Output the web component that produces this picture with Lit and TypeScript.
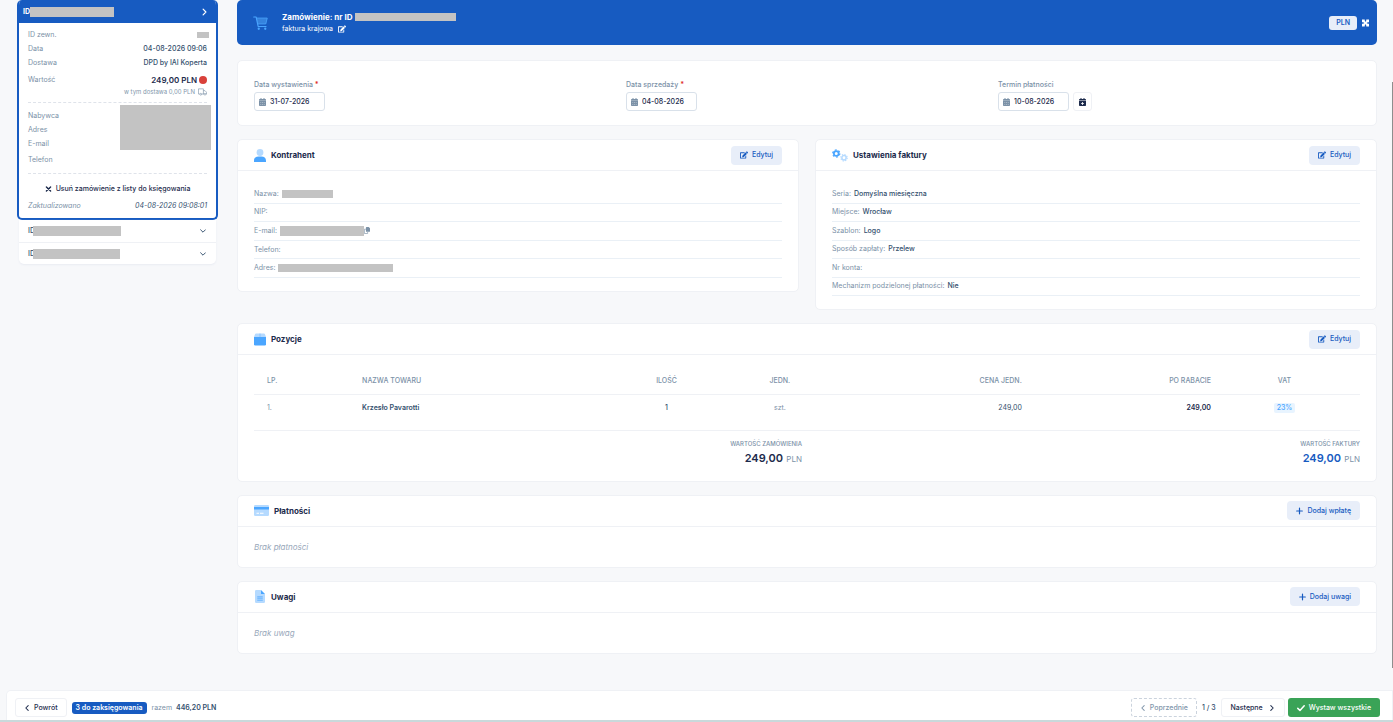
import { LitElement, html, css, svg, nothing, type TemplateResult } from "lit";
import { customElement, property } from "lit/decorators.js";
import { classMap } from "lit/directives/class-map.js";

type Icon = { box: string; body: TemplateResult };

const icons: Record<string, Icon> = {
  edit: {
    box: "0 0 576 512",
    body: svg`<path fill="currentColor" d="M402.6 83.2l90.2 90.2c3.8 3.8 3.8 10 0 13.8L274.4 405.6l-92.8 10.3c-12.4 1.4-22.9-9.1-21.5-21.5l10.3-92.8L388.8 83.2c3.8-3.8 10-3.8 13.8 0zm162-22.9l-48.8-48.8c-15.2-15.2-39.9-15.2-55.2 0l-35.4 35.4c-3.8 3.8-3.8 10 0 13.8l90.2 90.2c3.8 3.8 10 3.8 13.8 0l35.4-35.4c15.2-15.3 15.2-40 0-55.2zM384 346.2V448H64V128h229.8c3.2 0 6.2-1.3 8.5-3.5l40-40c7.6-7.6 2.2-20.5-8.5-20.5H48C21.5 64 0 85.5 0 112v352c0 26.5 21.5 48 48 48h352c26.5 0 48-21.5 48-48V306.2c0-10.7-12.9-16-20.5-8.5l-40 40c-2.2 2.3-3.5 5.3-3.5 8.5z"/>`,
  },
  cart: {
    box: "0 0 30 28",
    body: svg`<path fill="#3583de" d="M7 4h22l-3 12H9z"/><path fill="none" stroke="#4ba6ff" stroke-width="2.4" stroke-linecap="round" stroke-linejoin="round" d="M1.5 2h4.8l4 19H26"/><path fill="none" stroke="#4ba6ff" stroke-width="1.4" d="M7 4h21.500l-3 12H9.500"/><circle cx="11.500" cy="25.500" r="2.300" fill="#4ba6ff"/><circle cx="24.500" cy="25.500" r="2.300" fill="#4ba6ff"/>`,
  },
  user: {
    box: "0 0 24 26",
    body: svg`<circle cx="12" cy="7" r="6.800" fill="#b5daff"/><path fill="#4ba6ff" d="M0 26v-3c0-5 4-8 9-8h6c5 0 9 3 9 8v3z"/>`,
  },
  gears: {
    box: "0 0 32 26",
    body: svg`<circle cx="8.500" cy="9" r="4.800" fill="none" stroke="#4ba6ff" stroke-width="3.600"/><circle cx="8.500" cy="9" r="7.200" fill="none" stroke="#4ba6ff" stroke-width="2.400" stroke-dasharray="3.700 3.840"/><circle cx="24" cy="17.500" r="4.300" fill="none" stroke="#b5daff" stroke-width="3"/><circle cx="24" cy="17.500" r="6.500" fill="none" stroke="#b5daff" stroke-width="2.200" stroke-dasharray="2.600 2.505"/>`,
  },
  box: {
    box: "0 0 24 24",
    body: svg`<path fill="#b5daff" d="M4 0h7v7H0l2-5.500C2.400.500 3 0 4 0zm9 0h7c1 0 1.600.500 2 1.500L24 7H13z"/><path fill="#8cc6ff" d="M10.500 0h3v7h-3z"/><path fill="#4ba6ff" d="M0 7h24v14.500a2.500 2.500 0 0 1-2.500 2.500h-19A2.500 2.500 0 0 1 0 21.500z"/>`,
  },
  card: {
    box: "0 0 30 24",
    body: svg`<rect y="1" width="30" height="22" rx="2.500" fill="#b5daff"/><path fill="#4ba6ff" d="M0 5h30v5H0z"/><path fill="#fff" d="M5 16.500h5v1.800H5zm7 0h7v1.800h-7z"/>`,
  },
  note: {
    box: "0 0 24 26",
    body: svg`<path fill="#b5daff" d="M4.500 0H14v8h8v15.500a2.500 2.500 0 0 1-2.500 2.500h-15A2.500 2.500 0 0 1 2 23.500v-21A2.500 2.500 0 0 1 4.500 0z"/><path fill="#4ba6ff" d="M14 0l8 8h-8z"/><path fill="#7dbeff" d="M6.500 12h11v2.600h-11zm0 3.200h11v3h-11zm0 3.600h11v3.200h-11z"/>`,
  },
  calendar: {
    box: "0 0 14 16",
    body: svg`<path fill="currentColor" d="M3 0h2v2h4V0h2v2h1.500A1.500 1.500 0 0 1 14 3.500V5H0V3.500A1.500 1.500 0 0 1 1.500 2H3zM0 5.500h14v9a1.500 1.500 0 0 1-1.500 1.500h-11A1.500 1.500 0 0 1 0 14.500z"/><path fill="#fff" opacity=".35" d="M2.500 8h2v2h-2zm3.500 0h2v2H6zm3.500 0h2v2h-2zm-7 4h2v2h-2zM6 12h2v2H6zm3.500 0h2v2h-2z"/>`,
  },
  calendarPlus: {
    box: "0 0 14 16",
    body: svg`<path fill="currentColor" d="M3 0h2v2h4V0h2v2h1.500A1.500 1.500 0 0 1 14 3.500V5H0V3.500A1.500 1.500 0 0 1 1.500 2H3zM0 6h14v8.500a1.500 1.500 0 0 1-1.500 1.500h-11A1.500 1.500 0 0 1 0 14.500z"/><path fill="#fff" d="M6.200 7.800h1.600V10H10v1.600H7.800v2.200H6.200v-2.200H4V10h2.200z"/>`,
  },
  right: { box: "0 0 10 10", body: svg`<path fill="none" stroke="currentColor" stroke-width="1.700" stroke-linecap="round" stroke-linejoin="round" d="M3 1l4 4-4 4"/>` },
  left: { box: "0 0 10 10", body: svg`<path fill="none" stroke="currentColor" stroke-width="1.700" stroke-linecap="round" stroke-linejoin="round" d="M7 1L3 5l4 4"/>` },
  down: { box: "0 0 10 10", body: svg`<path fill="none" stroke="currentColor" stroke-width="1.600" stroke-linecap="round" stroke-linejoin="round" d="M1 3l4 4 4-4"/>` },
  times: { box: "0 0 10 10", body: svg`<path fill="none" stroke="currentColor" stroke-width="2" stroke-linecap="round" d="M2 2l6 6M8 2l-6 6"/>` },
  plus: { box: "0 0 10 10", body: svg`<path fill="none" stroke="currentColor" stroke-width="1.700" stroke-linecap="round" d="M5 1v8M1 5h8"/>` },
  check: { box: "0 0 10 10", body: svg`<path fill="none" stroke="currentColor" stroke-width="1.900" stroke-linecap="round" stroke-linejoin="round" d="M1 5.500l2.700 2.700L9 2.200"/>` },
  expand: {
    box: "0 0 14 14",
    body: svg`<path fill="currentColor" d="M0 0h5.500v2L7 5.200 8.500 2V0H14v5.500h-2L8.800 7l3.200 1.500h2V14H8.500v-2L7 8.800 5.500 12v2H0V8.500h2L5.200 7 2 5.500H0z"/><path fill="currentColor" d="M5 5h4v4H5z"/>`,
  },
  truck: {
    box: "0 0 20 16",
    body: svg`<path fill="none" stroke="currentColor" stroke-width="1.500" stroke-linejoin="round" d="M4 12.500H1V1h11v11.500H8M12 5h3.500L19 8.500v4h-1.500M12 12.500h1.500"/><circle cx="6" cy="13" r="2" fill="none" stroke="currentColor" stroke-width="1.400"/><circle cx="15.500" cy="13" r="2" fill="none" stroke="currentColor" stroke-width="1.400"/>`,
  },
  copy: {
    box: "0 0 14 16",
    body: svg`<path fill="currentColor" d="M6 0h5l3 3v6.500A1.500 1.500 0 0 1 12.500 11H6a1.500 1.500 0 0 1-1.500-1.500v-8A1.500 1.500 0 0 1 6 0z"/><path fill="none" stroke="currentColor" stroke-width="1.500" d="M4.500 5H1v10h7.500v-3.500"/>`,
  },
};

@customElement("ui-icon")
export class UiIcon extends LitElement {
  @property() name = "";
  @property({ type: Number }) width = 8;
  @property({ type: Number }) height = 8;

  static styles = css`
    :host { display: inline-flex; flex: none; }
    svg { display: block; }
  `;

  render() {
    const icon = icons[this.name];
    return icon
      ? html`<svg width=${this.width} height=${this.height} viewBox=${icon.box} aria-hidden="true">${icon.body}</svg>`
      : nothing;
  }
}

@customElement("panel-card")
export class PanelCard extends LitElement {
  @property() heading = "";
  @property() icon = "";
  @property({ type: Number }) iconWidth = 12;
  @property() action = "";
  @property() actionIcon = "edit";

  static styles = css`
    :host {
      display: block;
      box-sizing: border-box;
      background: #fff;
      border: 1px solid #eff1f5;
      border-radius: 5px;
    }
    .head {
      display: flex;
      align-items: center;
      gap: 5px;
      box-sizing: border-box;
      height: 31px;
      padding: 0 16px;
      border-bottom: 1px solid #eff1f5;
    }
    h2 {
      flex: 1;
      margin: 0;
      font-size: 8px;
      line-height: 12px;
      font-weight: 700;
      color: #1d2b4c;
    }
    button {
      display: flex;
      align-items: center;
      gap: 4px;
      height: 19px;
      padding: 0 9px;
      border: 0;
      border-radius: 4px;
      background: #e8eef9;
      color: #175bc1;
      font: 500 7px/10px Inter, sans-serif;
    }
    .body { padding: 14px 16px 13px; }
  `;

  render() {
    const actionWidth = this.actionIcon === "edit" ? 8 : 7;
    return html`
      <div class="head">
        <ui-icon name=${this.icon} .width=${this.iconWidth} .height=${13}></ui-icon>
        <h2>${this.heading}</h2>
        <button type="button">
          <ui-icon name=${this.actionIcon} .width=${actionWidth}></ui-icon>${this.action}
        </button>
      </div>
      <div class="body"><slot></slot></div>
    `;
  }
}

type Detail = { label: string; value?: string; hidden?: number; tall?: boolean; copy?: boolean };

const contractor: Detail[] = [
  { label: "Nazwa:", hidden: 51 },
  { label: "NIP:" },
  { label: "E-mail:", hidden: 84, tall: true, copy: true },
  { label: "Telefon:" },
  { label: "Adres:", hidden: 115 },
];

const invoice: Detail[] = [
  { label: "Seria:", value: "Domyślna miesięczna" },
  { label: "Miejsce:", value: "Wrocław" },
  { label: "Szablon:", value: "Logo" },
  { label: "Sposób zapłaty:", value: "Przelew" },
  { label: "Nr konta:" },
  { label: "Mechanizm podzielonej płatności:", value: "Nie" },
];

const dates = [
  { id: "issued", label: "Data wystawienia", value: "31-07-2026", required: true },
  { id: "sold", label: "Data sprzedaży", value: "04-08-2026", required: true },
  { id: "due", label: "Termin płatności", value: "10-08-2026", required: false },
];

@customElement("app-root")
export class AppRoot extends LitElement {
  static styles = css`
    :host {
      display: flex;
      flex-direction: column;
      position: relative;
      box-sizing: border-box;
      min-height: 100vh;
      background: #f7f8fa;
      color: #34506e;
      font: 400 7px/10px Inter, sans-serif;
      border-bottom: 2px solid #c9d9db;
    }
    * { box-sizing: border-box; }
    button, input { font: inherit; color: inherit; }
    .layout {
      flex: 1;
      display: flex;
      align-items: flex-start;
      gap: 19px;
      padding: 0 16px 36px 17px;
    }
    .redacted { flex: none; height: 8px; background: #c3c3c3; }
    .redacted.tall { height: 10px; }

    aside { flex: none; width: 201px; }
    .order {
      border: 2px solid #175bc1;
      border-top: 0;
      border-radius: 5px;
      background: #fff;
      overflow: hidden;
    }
    .order-head {
      display: flex;
      align-items: center;
      width: 100%;
      height: 23px;
      padding: 0 8px 0 4px;
      border: 0;
      background: #175bc1;
      color: #fff;
      font-weight: 700;
    }
    .order-head ui-icon, .other ui-icon { margin-left: auto; }
    .order-body { padding: 5px 9px 3px; }
    .row {
      display: flex;
      justify-content: space-between;
      align-items: center;
      height: 14px;
    }
    .row.high { height: 18px; }
    .row.value { height: 18px; align-items: flex-end; padding-bottom: 3px; }
    .external { height: 6px; margin-right: -2px; }
    .label { color: #7b91a7; }
    .strong { font-weight: 500; }
    .sum {
      display: flex;
      align-items: center;
      gap: 2px;
      font-size: 8px;
      font-weight: 600;
      color: #1d2b4c;
    }
    .dot { width: 8px; height: 8px; border-radius: 50%; background: #d9413a; }
    .delivery {
      display: flex;
      justify-content: flex-end;
      align-items: center;
      gap: 3px;
      font-size: 6px;
      line-height: 8px;
      color: #8196ab;
    }
    .dash { height: 7px; border-bottom: 1px dashed #dfe3ea; }
    .dash.small { height: 5px; }
    .buyer { display: flex; justify-content: space-between; padding-top: 2px; }
    .buyer .redacted { height: 45px; width: 91px; margin-right: -4px; }
    .buyer-labels { padding-top: 4px; }
    .remove {
      display: flex;
      align-items: center;
      justify-content: center;
      gap: 4px;
      width: 100%;
      height: 16px;
      margin-top: 7px;
      padding: 0;
      border: 0;
      background: none;
      font-weight: 500;
      color: #1d2b4c;
    }
    .updated { font-style: italic; }
    .others {
      margin: 0 2px;
      background: #fff;
      border-radius: 0 0 5px 5px;
      box-shadow: 0 1px 2px #e9ecf2;
    }
    .other {
      display: flex;
      align-items: center;
      width: 100%;
      height: 22px;
      padding: 0 10px 0 9px;
      border: 0;
      background: none;
      font-weight: 500;
      text-align: left;
    }
    .other + .other { border-top: 1px solid #eff1f5; }
    .other .redacted { margin-left: -2px; }

    main { flex: 1; min-width: 0; display: flex; flex-direction: column; gap: 13px; }
    .hero {
      display: flex;
      align-items: center;
      height: 45px;
      margin-bottom: 2px;
      padding: 0 8px 0 16px;
      border-radius: 5px;
      background: #175bc1;
      color: #fff;
    }
    .hero-text { flex: 1; padding-left: 14px; }
    h1 {
      display: flex;
      align-items: center;
      gap: 3px;
      margin: 0;
      font-size: 8px;
      line-height: 12px;
      font-weight: 700;
    }
    .kind { display: flex; align-items: center; gap: 5px; height: 12px; }
    .icon-button { display: flex; padding: 0; border: 0; background: none; }
    .currency {
      height: 14px;
      margin-right: 5px;
      padding: 0 7px;
      border: 0;
      border-radius: 3px;
      background: #e8eef9;
      color: #175bc1;
      font-weight: 600;
    }
    .dates {
      display: grid;
      grid-template-columns: repeat(3, 1fr);
      gap: 10px;
      padding: 19px 16px 14px;
      background: #fff;
      border: 1px solid #eff1f5;
      border-radius: 5px;
    }
    .dates label { display: block; margin-bottom: 2px; font-weight: 500; color: #7b91a7; }
    .required { color: #e0322d; font-weight: 700; }
    .date-line { display: flex; gap: 4px; }
    .date-box {
      display: flex;
      align-items: center;
      gap: 4px;
      width: 71px;
      height: 19px;
      padding: 0 4px;
      border: 1px solid #d9e1ea;
      border-radius: 3px;
      color: #7b91a7;
    }
    .date-box input {
      min-width: 0;
      width: 100%;
      padding: 0;
      border: 0;
      outline: 0;
      background: none;
      font-weight: 500;
      color: #1d2b4c;
    }
    .quick {
      display: flex;
      align-items: center;
      justify-content: center;
      width: 19px;
      height: 19px;
      padding: 0;
      border: 1px solid #eff1f5;
      border-radius: 3px;
      background: #fff;
      color: #1d2b4c;
    }
    .pair {
      display: grid;
      grid-template-columns: 1fr 1fr;
      align-items: start;
      gap: 16px;
    }
    .details { display: grid; grid-auto-rows: 1fr; min-height: 93px; margin: 0; }
    .details.six { min-height: 111px; }
    .detail {
      display: flex;
      align-items: center;
      border-bottom: 1px solid #eaf0f6;
    }
    .detail dt { color: #7b91a7; }
    .detail dd {
      display: flex;
      align-items: center;
      margin: 0 0 0 3px;
      font-weight: 500;
      color: #34506e;
    }

    table { width: 100%; border-collapse: collapse; table-layout: fixed; }
    th, td {
      padding: 0 13px;
      border-bottom: 1px solid #eff1f5;
      text-align: left;
      font-weight: 400;
    }
    th { height: 25px; font-weight: 500; color: #7b91a7; }
    td { height: 36px; padding-top: 8px; vertical-align: top; }
    .center { text-align: center; }
    .right { text-align: right; }
    .vat { padding-right: 28px; }
    .name { font-weight: 600; }
    .dark { font-weight: 600; color: #1d2b4c; }
    .rate {
      display: inline-block;
      padding: 0 3px;
      border-radius: 2px;
      background: #e8f4ff;
      color: #4ba6ff;
      font-weight: 500;
    }
    .c-no { width: 8.6%; }
    .c-name { width: 23.6%; }
    .c-qty { width: 10.2%; }
    .c-unit { width: 10.3%; }
    .c-price { width: 17.9%; }
    .c-disc { width: 17.1%; }
    .totals {
      display: grid;
      grid-template-columns: 1fr 1fr;
      gap: 10px;
      padding: 8px 0 2px;
      text-align: right;
      font-size: 6px;
      font-weight: 500;
      color: #7b91a7;
    }
    .total { margin-top: 2px; font-size: 8px; line-height: 14px; font-weight: 400; }
    .total strong { margin-right: 1px; font-size: 11px; font-weight: 600; color: #1d2b4c; }
    .total .blue { color: #175bc1; }
    .empty { margin: 0; font-size: 8px; line-height: 13px; font-style: italic; color: #98a8ba; }

    footer {
      display: flex;
      align-items: center;
      gap: 5px;
      height: 30px;
      margin-left: 6px;
      padding: 4px 12px 0 8px;
      background: #fff;
      border: 1px solid #eff1f5;
      border-bottom: 0;
      border-radius: 5px 0 0 0;
    }
    footer button {
      display: flex;
      align-items: center;
      gap: 4px;
      height: 19px;
      padding: 0 8px;
      border: 1px solid #eff1f5;
      border-radius: 3px;
      background: #fff;
      font-weight: 500;
      color: #1d2b4c;
    }
    footer .prev { border: 1px dashed #cbd3dd; color: #8196ab; }
    footer .next { gap: 6px; padding: 0 9px; }
    footer .issue { margin-left: -2px; padding: 0 9px; border: 0; background: #3aa357; color: #fff; }
    .badge {
      height: 12px;
      padding: 1px 4px;
      border-radius: 3px;
      background: #175bc1;
      color: #fff;
      font-weight: 600;
    }
    .together { flex: 1; color: #7b91a7; }
    .together strong { margin-left: 2px; font-weight: 600; color: #34506e; }
    .thumb {
      position: absolute;
      top: 82px;
      right: 0;
      bottom: 52px;
      width: 1px;
      background: #8e8e8e;
    }
  `;

  private redacted(width: number, tall = false) {
    return html`<span class=${classMap({ redacted: true, tall })} style="width:${width}px"></span>`;
  }

  private details(items: Detail[]) {
    return html`
      <dl class=${classMap({ details: true, six: items.length > 5 })}>
        ${items.map(
          (d) => html`<div class="detail">
            <dt>${d.label}</dt>
            <dd>
              ${d.value ?? nothing}${d.hidden ? this.redacted(d.hidden, d.tall) : nothing}
              ${d.copy
                ? html`<button class="icon-button label" type="button" aria-label="Kopiuj">
                    <ui-icon name="copy" .width=${6} .height=${7}></ui-icon>
                  </button>`
                : nothing}
            </dd>
          </div>`
        )}
      </dl>
    `;
  }

  private sidebar() {
    return html`
      <aside>
        <section class="order">
          <button class="order-head" type="button">
            ID${this.redacted(84, true)}<ui-icon name="right" .width=${7}></ui-icon>
          </button>
          <div class="order-body">
            <div class="row">
              <span class="label">ID zewn.</span><span class="redacted external" style="width:12px"></span>
            </div>
            <div class="row"><span class="label">Data</span><span class="strong">04-08-2026 09:06</span></div>
            <div class="row"><span class="label">Dostawa</span><span class="strong">DPD by IAI Koperta</span></div>
            <div class="row value">
              <span class="label">Wartość</span>
              <span class="sum">249,00 PLN <span class="dot"></span></span>
            </div>
            <div class="delivery">
              w tym dostawa 0,00 PLN <ui-icon name="truck" .width=${9}></ui-icon>
            </div>
            <div class="dash"></div>
            <div class="buyer">
              <div class="buyer-labels label">
                <div class="row">Nabywca</div>
                <div class="row">Adres</div>
                <div class="row">E-mail</div>
                <div class="row high">Telefon</div>
              </div>
              <div class="redacted"></div>
            </div>
            <div class="dash small"></div>
            <button class="remove" type="button">
              <ui-icon name="times" .width=${7}></ui-icon>Usuń zamówienie z listy do księgowania
            </button>
            <div class="row high updated">
              <span class="label">Zaktualizowano</span><span>04-08-2026 09:08:01</span>
            </div>
          </div>
        </section>
        <div class="others">
          ${[88, 87].map(
            (w) => html`<button class="other" type="button">
              ID${this.redacted(w, true)}<ui-icon name="down" .width=${6}></ui-icon>
            </button>`
          )}
        </div>
      </aside>
    `;
  }

  private items() {
    return html`
      <table>
        <thead>
          <tr>
            <th class="c-no">LP.</th>
            <th class="c-name">NAZWA TOWARU</th>
            <th class="c-qty center">ILOŚĆ</th>
            <th class="c-unit center">JEDN.</th>
            <th class="c-price right">CENA JEDN.</th>
            <th class="c-disc right">PO RABACIE</th>
            <th class="center vat">VAT</th>
          </tr>
        </thead>
        <tbody>
          <tr>
            <td class="label">1.</td>
            <td class="name">Krzesło Pavarotti</td>
            <td class="center strong">1</td>
            <td class="center label">szt.</td>
            <td class="right">249,00</td>
            <td class="right dark">249,00</td>
            <td class="center vat"><span class="rate">23%</span></td>
          </tr>
        </tbody>
      </table>
      <div class="totals">
        <div>
          WARTOŚĆ ZAMÓWIENIA
          <div class="total"><strong>249,00</strong> PLN</div>
        </div>
        <div>
          WARTOŚĆ FAKTURY
          <div class="total"><strong class="blue">249,00</strong> PLN</div>
        </div>
      </div>
    `;
  }

  render() {
    return html`
      <div class="layout">
        ${this.sidebar()}
        <main>
          <header class="hero">
            <ui-icon name="cart" .width=${15} .height=${14}></ui-icon>
            <div class="hero-text">
              <h1>Zamówienie: nr ID${this.redacted(101)}</h1>
              <div class="kind">
                faktura krajowa
                <button class="icon-button" type="button" aria-label="Zmień rodzaj">
                  <ui-icon name="edit"></ui-icon>
                </button>
              </div>
            </div>
            <button class="currency" type="button">PLN</button>
            <button class="icon-button" type="button" aria-label="Pełny ekran">
              <ui-icon name="expand" .width=${7}></ui-icon>
            </button>
          </header>

          <section class="dates">
            ${dates.map(
              (d) => html`<div>
                <label for=${d.id}>${d.label} ${d.required ? html`<span class="required">*</span>` : nothing}</label>
                <div class="date-line">
                  <div class="date-box">
                    <ui-icon name="calendar" .width=${7}></ui-icon>
                    <input id=${d.id} type="text" .value=${d.value} />
                  </div>
                  ${d.required
                    ? nothing
                    : html`<button class="quick" type="button" aria-label="Wybierz termin">
                        <ui-icon name="calendarPlus" .width=${7}></ui-icon>
                      </button>`}
                </div>
              </div>`
            )}
          </section>

          <div class="pair">
            <panel-card heading="Kontrahent" icon="user" action="Edytuj">${this.details(contractor)}</panel-card>
            <panel-card heading="Ustawienia faktury" icon="gears" .iconWidth=${16} action="Edytuj">
              ${this.details(invoice)}
            </panel-card>
          </div>

          <panel-card heading="Pozycje" icon="box" action="Edytuj">${this.items()}</panel-card>

          <panel-card heading="Płatności" icon="card" .iconWidth=${15} action="Dodaj wpłatę" actionIcon="plus">
            <p class="empty">Brak płatności</p>
          </panel-card>

          <panel-card heading="Uwagi" icon="note" action="Dodaj uwagi" actionIcon="plus">
            <p class="empty">Brak uwag</p>
          </panel-card>
        </main>
      </div>

      <footer>
        <button type="button"><ui-icon name="left" .width=${6}></ui-icon>Powrót</button>
        <span class="badge">3 do zaksięgowania</span>
        <span class="together">razem <strong>446,20 PLN</strong></span>
        <button class="prev" type="button"><ui-icon name="left" .width=${6}></ui-icon>Poprzednie</button>
        <span class="strong">1 / 3</span>
        <button class="next" type="button">Następne<ui-icon name="right" .width=${6}></ui-icon></button>
        <button class="issue" type="button"><ui-icon name="check"></ui-icon>Wystaw wszystkie</button>
      </footer>
      <div class="thumb"></div>
    `;
  }
}
